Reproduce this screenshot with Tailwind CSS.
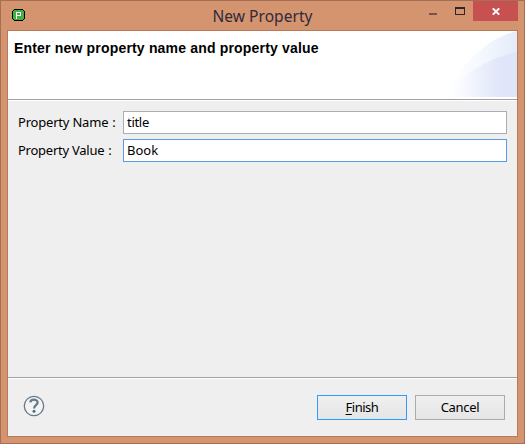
<!DOCTYPE html>
<html lang="en">
<head>
<meta charset="utf-8">
<title>New Property</title>
<script src="https://cdn.jsdelivr.net/npm/@tailwindcss/browser@4"></script>
</head>
<body class="overflow-hidden">
<div class="flex h-[444px] w-[525px] flex-col border border-[#a56f54] bg-[#d3946f] px-1.5 pb-1.5 font-['Noto_Sans',sans-serif] text-black">
  <header class="relative flex h-[29px] shrink-0 justify-center">
    <svg class="absolute left-[5px] top-2" width="13" height="12" viewBox="0 0 13 12" shape-rendering="crispEdges">
      <path d="M2 0h9v1h1v1h1v8h-1v1h-1v1H2v-1H1v-1H0V2h1V1h1z" fill="#000"/>
      <path d="M2 1h9v1h1v8h-1v1H2v-1H1V2h1z" fill="#3fb23f"/>
      <path d="M4 3h5v4H5v3H4zM5 4v2h3V4z" fill="#fff" fill-rule="evenodd"/>
    </svg>
    <h1 class="pt-[3px] text-[15.5px] leading-6 font-normal tracking-[0.05px] whitespace-nowrap text-[#302a3a]">New Property</h1>
    <div class="absolute right-0 top-0 flex h-5">
      <svg width="45" height="20" viewBox="0 0 45 20" shape-rendering="crispEdges"><path d="M1 12h8v2H1z" fill="#7b514a"/><path d="M27.500 6.500h9v7h-9z" fill="none" stroke="#30242b"/><path d="M27 7h10" stroke="#30242b" stroke-width="2"/></svg>
      <div class="flex w-[45px] items-center justify-center bg-[#c75050]">
        <svg class="mt-px" width="8" height="7" viewBox="0 0 8 7"><path d="M.8.3l6.400 6.400M7.200.3L.8 6.700" stroke="#fff" stroke-width="1.900"/></svg>
      </div>
    </div>
  </header>
  <main class="flex flex-1 flex-col border border-[#b77b5b] bg-[#efefef]">
    <section class="flex h-[69px] shrink-0 justify-between border-b border-[#a0a0a0] bg-white">
      <h2 class="pt-[9px] pl-1.5 font-['Liberation_Sans',sans-serif] text-[14px] leading-4 font-bold tracking-[0.18px] whitespace-nowrap">Enter new property name and property value</h2>
      <svg class="shrink-0" width="74" height="66" viewBox="0 0 74 66">
        <defs>
          <linearGradient id="outer"><stop offset="0" stop-color="#fff"/><stop offset=".45" stop-color="#f6f9fe"/><stop offset="1" stop-color="#e5ebfa"/></linearGradient>
          <linearGradient id="inner"><stop offset="0" stop-color="#fff" stop-opacity="0"/><stop offset=".4" stop-color="#eff3fd"/><stop offset=".75" stop-color="#e1e6f9"/><stop offset="1" stop-color="#dfe5f9"/></linearGradient>
        </defs>
        <path d="M3 66C15 39 39 8 74 0v66z" fill="url(#outer)"/>
        <path d="M3 66C20 44 39 29 74 21v45z" fill="url(#inner)"/>
      </svg>
    </section>
    <form class="grid grid-cols-[105px_384px] content-start gap-y-[5px] border-t border-white px-2.5 pt-2.5 text-[13px]">
      <label for="name" class="leading-[23px] tracking-[-0.2px] whitespace-nowrap">Property Name<span class="pl-1">:</span></label>
      <input id="name" value="title" class="h-[23px] border border-[#abadb3] bg-white px-[3px] pb-px tracking-[-0.3px] outline-none">
      <label for="value" class="leading-[23px] tracking-[-0.25px] whitespace-nowrap">Property Value<span class="pl-1">:</span></label>
      <input id="value" value="Book" class="h-[23px] border border-[#569de5] bg-white px-[3px] pb-px outline-none">
    </form>
    <footer class="mt-auto h-[59px] border-t border-[#a0a0a0]">
      <div class="flex h-[58px] border-t border-white pt-4 pr-3 pl-[15px] text-[13px]">
        <svg width="22" height="22" viewBox="0 0 22 22"><circle cx="11" cy="11" r="9.700" fill="#f4f4f4" stroke="#687c8e" stroke-width="1.300"/><path d="M7.300 7.400C7.400 3.800 14.600 3.600 14.600 7.500c0 2.700-3.500 2.800-3.500 5.900" fill="none" stroke="#657c8d" stroke-width="2.300"/><circle cx="11" cy="16.300" r="1.500" fill="#536b7d"/></svg>
        <div class="ml-auto flex gap-2">
          <button class="h-[25px] w-[90px] border border-[#3399ff] bg-linear-to-b from-[#f0f0f0] to-[#e4e5e5] tracking-[-0.5px]"><span class="underline underline-offset-2">F</span>inish</button>
          <button class="h-[25px] w-[90px] border border-[#acacac] bg-linear-to-b from-[#f0f0f0] to-[#e4e5e5] tracking-[-0.3px]">Cancel</button>
        </div>
      </div>
    </footer>
  </main>
</div>
</body>
</html>
